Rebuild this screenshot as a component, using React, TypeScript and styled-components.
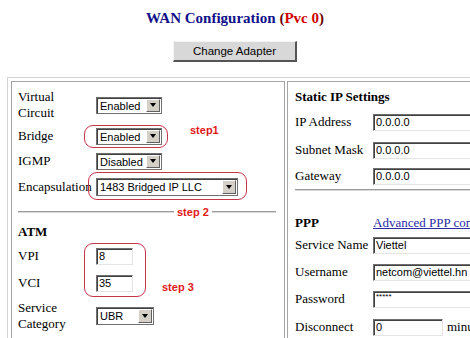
import React from "react";
import styled, { createGlobalStyle } from "styled-components";

const GlobalStyle = createGlobalStyle`
  body {
    margin: 0;
    background: #fff;
    overflow: hidden;
  }
`;

const serif = `"Liberation Serif", "Times New Roman", serif`;
const sans = `"Liberation Sans", Arial, sans-serif`;

const App = () => {
  return (
    <Page>
      <GlobalStyle />
      <Title>
        <TitleMain>WAN Configuration</TitleMain> <Paren>(</Paren>
        <Pvc>Pvc 0</Pvc>
        <Paren>)</Paren>
      </Title>
      <ActionButton type="button">Change Adapter</ActionButton>

      <Frame>
        <Cell $w={274} $pl={6} $pt={6}>
          <Row $h={34}>
            <Label>Virtual<br />Circuit</Label>
            <Dropdown $w={66}><DropValue>Enabled</DropValue><Arrow /></Dropdown>
          </Row>
          <Row $h={28}>
            <Label>Bridge</Label>
            <Dropdown $w={66}><DropValue>Enabled</DropValue><Arrow /></Dropdown>
          </Row>
          <Row $h={22}>
            <Label>IGMP</Label>
            <Dropdown $w={66}><DropValue>Disabled</DropValue><Arrow /></Dropdown>
          </Row>
          <Row $h={30}>
            <Label>Encapsulation</Label>
            <Dropdown $w={142} $h={18}><DropValue>1483 Bridged IP LLC</DropValue><Arrow /></Dropdown>
          </Row>
          <Divider $top={9} $bottom={7} $w={258} />
          <Row $h={24}>
            <SectionTitle>ATM</SectionTitle>
          </Row>
          <Row $h={24}>
            <Label>VPI</Label>
            <TextBox $w={37} readOnly value="8" />
          </Row>
          <Row $h={30}>
            <Label>VCI</Label>
            <TextBox $w={37} readOnly value="35" />
          </Row>
          <Row $h={36}>
            <Label>Service<br />Category</Label>
            <Dropdown $w={58} $h={18}><DropValue>UBR</DropValue><Arrow /></Dropdown>
          </Row>

          <Ring $x={72} $y={43} $w={84} $h={23} />
          <Note $x={175} $y={41}>step1</Note>
          <Ring $x={76} $y={90} $w={159} $h={28} />
          <Note $x={162} $y={123} $bg>step 2</Note>
          <Ring $x={72} $y={161} $w={62} $h={54} />
          <Note $x={147} $y={198}>step 3</Note>
        </Cell>

        <Cell $w={220} $pl={7} $pt={4}>
          <Row $h={22}>
            <SectionTitle>Static IP Settings</SectionTitle>
          </Row>
          <Row $h={28}>
            <Label>IP Address</Label>
            <TextBox $w={120} readOnly value="0.0.0.0" />
          </Row>
          <Row $h={28}>
            <Label>Subnet Mask</Label>
            <TextBox $w={120} readOnly value="0.0.0.0" />
          </Row>
          <Row $h={24}>
            <Label>Gateway</Label>
            <TextBox $w={120} readOnly value="0.0.0.0" />
          </Row>
          <Divider $top={1} $bottom={23} />
          <Row $h={18}>
            <SectionTitle>PPP</SectionTitle>
            <PlainLink href="#">Advanced PPP configuration</PlainLink>
          </Row>
          <Row $h={26}>
            <Label>Service Name</Label>
            <TextBox $w={120} readOnly value="Viettel" />
          </Row>
          <Row $h={28}>
            <Label>Username</Label>
            <TextBox $w={120} readOnly value="netcom@viettel.hn" />
          </Row>
          <Row $h={26}>
            <Label>Password</Label>
            <TextBox $w={120} $small readOnly value="*****" />
          </Row>
          <Row $h={30}>
            <Label>Disconnect</Label>
            <Inline>
              <TextBox $w={70} readOnly value="0" />
              <Label>minutes</Label>
            </Inline>
          </Row>
        </Cell>
      </Frame>
    </Page>
  );
};

const Page = styled.div`
  width: 470px;
  height: 338px;
  overflow: hidden;
  display: flex;
  flex-direction: column;
  align-items: center;
`;

const Title = styled.div`
  flex-shrink: 0;
  margin-top: 9px;
  height: 18px;
  line-height: 18px;
  font-family: ${serif};
  font-weight: bold;
  font-size: 15px;
  white-space: nowrap;
`;

const TitleMain = styled.span`
  color: #10108a;
`;

const Paren = styled.span`
  color: #6a0000;
`;

const Pvc = styled.span`
  color: #d00000;
`;

const ActionButton = styled.button`
  flex-shrink: 0;
  margin-top: 14px;
  width: 124px;
  height: 21px;
  padding: 0;
  background: #d8d8d8;
  border-style: solid;
  border-width: 1px 2px 2px 1px;
  border-color: #f4f4f4 #555 #555 #f4f4f4;
  font-family: ${sans};
  font-size: 11.5px;
  color: #000;
`;

const Frame = styled.div`
  flex-shrink: 0;
  align-self: flex-start;
  margin: 15px 0 0 7px;
  padding: 3px;
  border: 1px solid #d4d4d4;
  display: flex;
  gap: 2px;
`;

const Cell = styled.div<{ $w: number; $pl: number; $pt: number }>`
  position: relative;
  flex-shrink: 0;
  width: ${(p) => p.$w}px;
  height: 300px;
  box-sizing: border-box;
  border: 1px solid #a4a4a4;
  padding: ${(p) => p.$pt}px 0 0 ${(p) => p.$pl}px;
  display: flex;
  flex-direction: column;
`;

const Row = styled.div<{ $h: number }>`
  flex-shrink: 0;
  height: ${(p) => p.$h}px;
  display: grid;
  grid-template-columns: 78px auto;
  align-items: center;
  justify-items: start;
`;

const Label = styled.div`
  font-family: ${serif};
  font-size: 13px;
  line-height: 16px;
  color: #000;
  white-space: nowrap;
`;

const SectionTitle = styled(Label)`
  font-weight: bold;
`;

const PlainLink = styled.a`
  font-family: ${serif};
  font-size: 13px;
  line-height: 16px;
  color: #2b2ba6;
  text-decoration: underline;
  white-space: nowrap;
`;

const Dropdown = styled.div<{ $w: number; $h?: number }>`
  width: ${(p) => p.$w}px;
  height: ${(p) => p.$h ?? 17}px;
  box-sizing: border-box;
  border: 1px solid #707070;
  box-shadow: inset 1px 1px 0 #404040;
  background: #fff;
  display: flex;
  align-items: stretch;
  padding: 1px 1px 1px 3px;
`;

const DropValue = styled.span`
  flex: 1;
  font-family: ${sans};
  font-size: 11px;
  line-height: 14px;
  color: #000;
  white-space: nowrap;
  overflow: hidden;
`;

const Arrow = styled.span`
  width: 14px;
  box-sizing: border-box;
  background: #d4d0c8;
  border-style: solid;
  border-width: 1px;
  border-color: #fff #606060 #606060 #fff;
  display: flex;
  align-items: center;
  justify-content: center;

  &::after {
    content: "";
    border-left: 3px solid transparent;
    border-right: 3px solid transparent;
    border-top: 4px solid #000;
  }
`;

const TextBox = styled.input<{ $w: number; $small?: boolean }>`
  width: ${(p) => p.$w}px;
  height: 17px;
  box-sizing: border-box;
  margin: 0;
  padding: ${(p) => (p.$small ? "0 2px 6px" : "0 2px")};
  background: #fff;
  border-style: solid;
  border-width: 1px;
  border-color: #707070 #e4e4e4 #e4e4e4 #707070;
  box-shadow: inset 1px 1px 0 #404040;
  font-family: ${sans};
  font-size: ${(p) => (p.$small ? "8px" : "11px")};
  color: #000;
  outline: none;
`;

const Inline = styled.div`
  display: flex;
  align-items: center;
  gap: 4px;
`;

const Divider = styled.div<{ $top: number; $bottom: number; $w?: number }>`
  flex-shrink: 0;
  margin: ${(p) => p.$top}px 0 ${(p) => p.$bottom}px;
  width: ${(p) => (p.$w ? `${p.$w}px` : "100%")};
  height: 0;
  border-top: 1px solid #9c9c9c;
  border-bottom: 1px solid #d8d8d8;
`;

const Ring = styled.div<{ $x: number; $y: number; $w: number; $h: number }>`
  position: absolute;
  left: ${(p) => p.$x}px;
  top: ${(p) => p.$y}px;
  width: ${(p) => p.$w}px;
  height: ${(p) => p.$h}px;
  box-sizing: border-box;
  border: 1px solid #c8344a;
  border-radius: 9px;
  pointer-events: none;
`;

const Note = styled.div<{ $x: number; $y: number; $bg?: boolean }>`
  position: absolute;
  left: ${(p) => p.$x}px;
  top: ${(p) => p.$y}px;
  padding: 0 3px;
  background: ${(p) => (p.$bg ? "#fff" : "transparent")};
  font-family: ${sans};
  font-weight: bold;
  font-size: 11px;
  line-height: 14px;
  color: #e01818;
`;

export default App;
